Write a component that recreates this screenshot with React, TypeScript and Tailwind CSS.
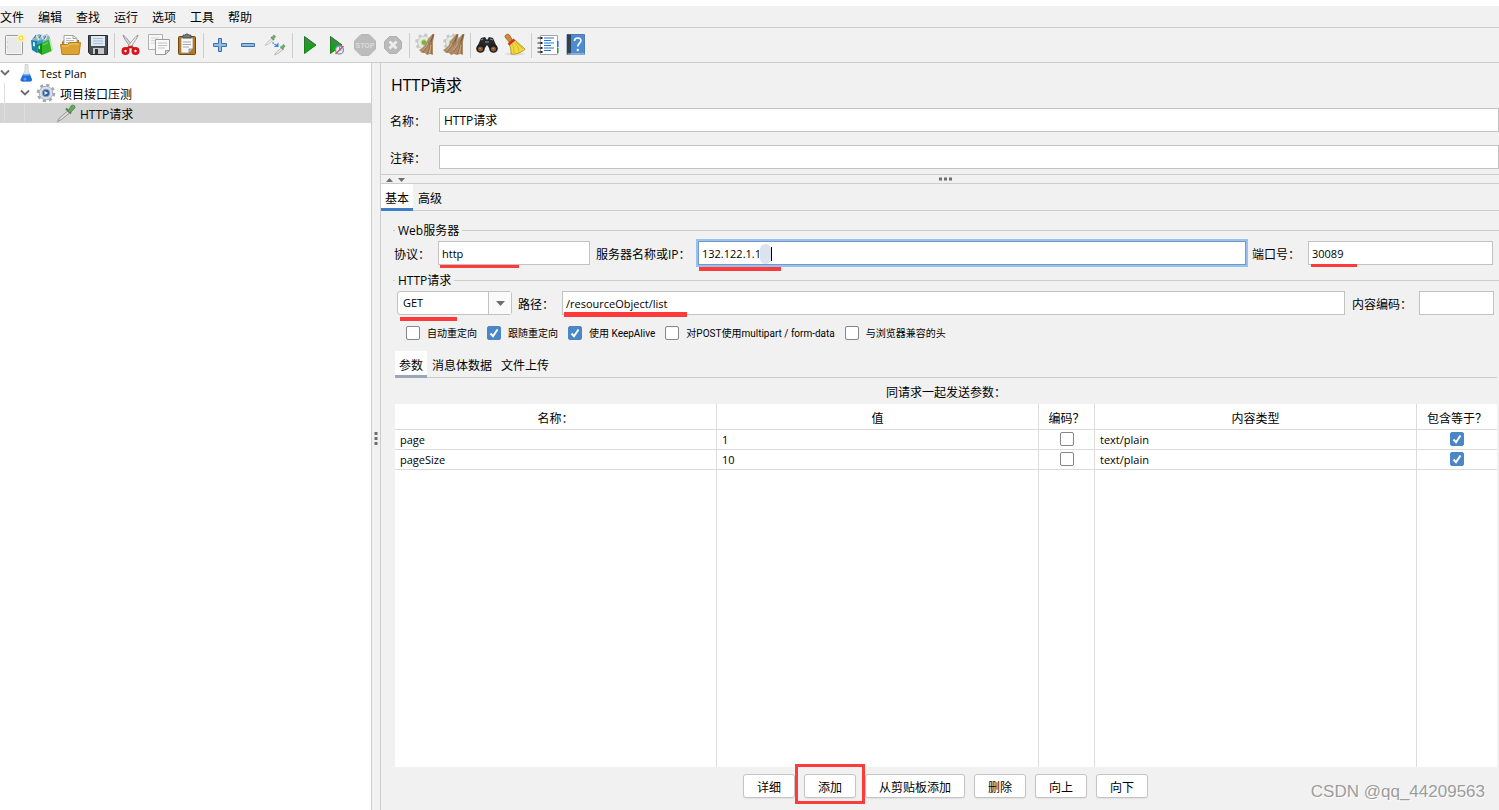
import React, { useState } from "react";

const menus = ["文件", "编辑", "查找", "运行", "选项", "工具", "帮助"];

function Svg({ children, size = 24 }: { children: React.ReactNode; size?: number }) {
  return (
    <svg width={size} height={size} viewBox={`0 0 ${size} ${size}`} fill="none" className="shrink-0" aria-hidden="true">
      {children}
    </svg>
  );
}

function NewIcon() {
  return (
    <Svg>
      <rect x="3.5" y="2.5" width="17" height="19" rx="1" fill="#f6f6f6" stroke="#9a9a9a" />
      <path d="M5 4h14v16H5z" fill="#e9e9e9" />
      <path d="M5 9h1M5 14h1" stroke="#bbb" />
      <circle cx="19" cy="5" r="4" fill="#fbf3a8" />
      <circle cx="19" cy="5" r="2.5" fill="#f2dc4a" />
      <circle cx="19" cy="5" r="1.2" fill="#fffce0" />
    </Svg>
  );
}

function TemplatesIcon() {
  return (
    <Svg>
      <path d="M2 6l4-4 4-1 3 2 4-2 3 3v9l-9 4-8-4z" fill="#8fb3c4" />
      <path d="M6 2l3 5M11 1l2 5M17 2l-2 5" stroke="#d5e5ed" strokeWidth="1.6" />
      <path d="M4 5l2-3M9 5l2-3M14 6l2-3" stroke="#47748c" />
      <path d="M1 7l6 1v12l-5-3z" fill="#1c7fb2" />
      <path d="M7 8l6-1v11l-6 2z" fill="#2fa2cf" />
      <path d="M3 9l2 .5v4l-2-.5z" fill="#c8eaf8" />
      <path d="M7 12l5-2v12l-4-3z" fill="#0e8a22" />
      <path d="M12 10l8-4 2 12-10 4z" fill="#35b52c" />
      <path d="M19 6l1.500 0 3 11-2 1z" fill="#c6e6bd" />
      <path d="M8.500 13l1.500-.5v4l-1.500-1z" fill="#c5f0bd" />
      <path d="M13 12l5-2.500" stroke="#7fdc6c" />
    </Svg>
  );
}

function OpenIcon() {
  return (
    <Svg>
      <path d="M4 20V9l2-2h15v13z" fill="#a87414" />
      <path d="M6 2.500h9l4 3V14H6z" fill="#fbfbfb" stroke="#a3a3a3" />
      <path d="M15 2.500v3h4" stroke="#a3a3a3" />
      <path d="M8 5.500h5M8 7.500h8M8 9.500h8" stroke="#b9b9b9" />
      <path d="M2.500 11.500h7l2-2h11l-1.500 12h-17z" fill="#dca233" stroke="#b98119" />
      <path d="M4 13h6l2-2h9" stroke="#f0c76c" />
    </Svg>
  );
}

function SaveIcon() {
  return (
    <Svg>
      <path d="M2.500 2.500h19v19h-17l-2-2z" fill="#4a4f56" stroke="#282c31" />
      <path d="M5 3h14v10H5z" fill="#dfeaf5" />
      <path d="M7 5.500h10M7 8h10M7 10.500h10" stroke="#a8c0d8" />
      <path d="M7 15h11v6H7z" fill="#c5c7ca" />
      <path d="M9 16h3v5H9z" fill="#30353b" />
    </Svg>
  );
}

function CutIcon() {
  return (
    <Svg>
      <path d="M4 2c0 2 5 9 8 13l2-2C10 8 6 3 4 2z" fill="#d8d8d8" stroke="#858585" strokeWidth=".8" />
      <path d="M19 2c0 2-5 9-8 13l-2-2c4-5 8-10 10-11z" fill="#f2f2f2" stroke="#858585" strokeWidth=".8" />
      <ellipse cx="6.500" cy="18" rx="2.600" ry="2.600" stroke="#d9141b" strokeWidth="2.800" />
      <ellipse cx="16.500" cy="18" rx="2.600" ry="2.600" stroke="#d9141b" strokeWidth="2.800" />
      <path d="M8 15.500l3-1.500h1l3 1.500" stroke="#d9141b" strokeWidth="2.500" />
    </Svg>
  );
}

function CopyIcon() {
  return (
    <Svg>
      <path d="M1.500 1.500h14v15h-14z" fill="#f6f6f6" stroke="#b0b0b0" />
      <path d="M4 5h8M4 7.500h8M4 10h4" stroke="#d6d6d6" />
      <path d="M8.500 6.500h14v11l-4 4h-10z" fill="#fafafa" stroke="#9a9a9a" />
      <path d="M22.500 17.500h-4v4z" fill="#d5d5d5" stroke="#9a9a9a" />
      <path d="M11 10h9M11 12.500h9M11 15h7" stroke="#c0c0c0" />
    </Svg>
  );
}

function PasteIcon() {
  return (
    <Svg>
      <rect x="3.500" y="3.500" width="17" height="18" rx="1" fill="#b97818" stroke="#74460a" />
      <path d="M6 5h12v11l-4 4H6z" fill="#f8f8f8" stroke="#888" strokeWidth=".7" />
      <path d="M18 16h-4v4z" fill="#c0c0c0" stroke="#777" strokeWidth=".7" />
      <path d="M8 9h8M8 11.500h8M8 14h6" stroke="#a9a9a9" />
      <path d="M8 2h2l1-1h2l1 1h2v3H8z" fill="#777" stroke="#444" strokeWidth=".7" />
    </Svg>
  );
}

function PlusIcon() {
  return (
    <Svg>
      <path d="M10.500 5.500h3v5h5v3h-5v5h-3v-5h-5v-3h5z" fill="#8fbbe4" stroke="#3a70ac" />
    </Svg>
  );
}

function MinusIcon() {
  return (
    <Svg>
      <path d="M5.500 10.500h13v3h-13z" fill="#8fbbe4" stroke="#3a70ac" />
    </Svg>
  );
}

function ToggleIcon() {
  return (
    <Svg>
      <path d="M1 12.500l2-3 5-4 1.500 1.500-5 4z" fill="#ececec" stroke="#bdbdbd" strokeWidth=".8" />
      <path d="M7 4l3 3" stroke="#5d9853" strokeWidth="1.600" />
      <path d="M8.500 5.500l2.500-3" stroke="#6faa5e" strokeWidth="2.800" />
      <path d="M10.500 22l2-3 5-4 1.500 1.500-5 4z" fill="#ececec" stroke="#adadad" strokeWidth=".8" />
      <path d="M16.500 13.500l3 3" stroke="#5d9853" strokeWidth="1.600" />
      <path d="M18 15l2.500-3" stroke="#6faa5e" strokeWidth="2.800" />
      <path d="M8.500 9.500l4 3" stroke="#2f86ec" strokeWidth="1.300" strokeDasharray="1.500 1" />
      <path d="M14.500 9.500v4.500H10z" fill="#2f86ec" />
    </Svg>
  );
}

function StartIcon() {
  return (
    <Svg>
      <path d="M7.500 3.500L19 12 7.500 20.500z" fill="#0f930f" stroke="#1f7a1f" />
      <path d="M8 4l10 8H8z" fill="#3f8746" />
      <path d="M8 12h10l-10 8z" fill="#0fa80f" />
    </Svg>
  );
}

function StartNoTimersIcon() {
  return (
    <Svg>
      <path d="M5.500 3.500L17 12 5.500 20.500z" fill="#0f930f" stroke="#1f7a1f" />
      <path d="M6 4l10 8H6z" fill="#3f8746" />
      <path d="M6 12h10l-10 8z" fill="#0fa80f" />
      <circle cx="14.500" cy="17" r="4" fill="#e9eef7" stroke="#6c98cc" strokeWidth="1.300" />
      <path d="M14.500 14v3h2" stroke="#6c98cc" />
      <path d="M10.500 21l8-8" stroke="#e04c4c" strokeWidth="1.300" />
    </Svg>
  );
}

function StopIcon() {
  return (
    <Svg>
      <path d="M8 1.500h8l6.500 6.500v8L16 22.500H8L1.500 16V8z" fill="#bcbcbc" stroke="#b6b6b6" />
      <text x="12" y="15" textAnchor="middle" fontSize="7" fontWeight="700" fill="#dadada" fontFamily="Liberation Sans, sans-serif">STOP</text>
    </Svg>
  );
}

function ShutdownIcon() {
  return (
    <Svg>
      <path d="M8.500 3.500h7l5 5v7l-5 5h-7l-5-5v-7z" fill="#bababa" stroke="#b2b2b2" />
      <path d="M8.500 8.500l7 7M15.500 8.500l-7 7" stroke="#ededed" strokeWidth="2.800" />
    </Svg>
  );
}

function BroomHead({ x }: { x: number }) {
  return (
    <g transform={`translate(${x} 0)`}>
      <path d="M18.500 1h2l-1.500 8v13l-3-1-3 1-2-2-3 0-3-3c4-2 7-6 9-11z" fill="#b08c69" />
      <path d="M19.500 1.500l-3 8" stroke="#80603c" strokeWidth="1.600" />
      <path d="M15 9c-1 4-3 7-6 10M16 10c0 4-1 7-3 11M17.500 10v11" stroke="#8a6844" strokeWidth=".8" />
      <path d="M14 10c-1 3-3 5-5 7M17 12l-1.500 8" stroke="#cfb290" strokeWidth=".8" />
    </g>
  );
}

function GearBack() {
  return (
    <g>
      <circle cx="10" cy="9.500" r="7.500" stroke="#c6cac6" strokeWidth="2.800" strokeDasharray="3 2.900" />
      <circle cx="10" cy="9.500" r="6.500" fill="#e6e9e6" stroke="#c2c6c2" />
      <circle cx="10" cy="9.500" r="2.800" fill="#70b832" stroke="#c0dca8" />
    </g>
  );
}

function ClearIcon() {
  return (
    <Svg>
      <GearBack />
      <BroomHead x={0} />
    </Svg>
  );
}

function ClearAllIcon() {
  return (
    <Svg>
      <GearBack />
      <BroomHead x={-4} />
      <BroomHead x={2} />
    </Svg>
  );
}

function SearchIcon() {
  return (
    <Svg>
      <path d="M3 12l3-7 4-1 2 3 2-3 4 1 3 7-3 3h-4l-2-3-2 3H6z" fill="#25292c" />
      <path d="M6 7l2-1M15 6l3 1" stroke="#85898c" strokeWidth="1.300" />
      <path d="M10 9h4" stroke="#777" strokeWidth="1.500" />
      <circle cx="5.500" cy="15.500" r="4.300" fill="#1d1d1d" />
      <circle cx="18.500" cy="15.500" r="4.300" fill="#1d1d1d" />
      <circle cx="5.500" cy="16" r="2.500" fill="#8a5533" />
      <circle cx="18.500" cy="16" r="2.500" fill="#8a5533" />
      <path d="M4 15l2 1M17 15l2 1" stroke="#c09070" />
    </Svg>
  );
}

function ResetIcon() {
  return (
    <Svg>
      <ellipse cx="12" cy="21" rx="10" ry="1.500" fill="#ddd" />
      <path d="M2 4c0-3 4-4 5-1l3 5-3 2z" fill="#d28b35" stroke="#94591b" strokeWidth=".8" />
      <path d="M6 11l6-4 10 9c0 1-2 2-4 3s-7 3-10 2c0-3 0-7-2-10z" fill="#f0d840" stroke="#a98c0c" strokeWidth=".8" />
      <path d="M9 11c2 3 2 6 2 9M12 10c2 3 4 5 4 8M13 9l7 7" stroke="#cfb020" strokeWidth=".8" />
      <path d="M5.500 11.500l6-5" stroke="#d82f22" strokeWidth="2.600" />
    </Svg>
  );
}

function FunctionIcon() {
  return (
    <Svg>
      <path d="M4.500 2.500h17v19h-17z" fill="#fff" stroke="#a5a5a5" />
      <path d="M8 5h10M8 7.500h7M8 10h10M8 12.500h7M8 15h10M8 17.500h7" stroke="#2779d8" strokeWidth="1.200" />
      <path d="M1.500 5h4M1.500 10h4M1.500 15h4M1.500 19h4" stroke="#8a8a8a" strokeWidth="2.200" />
      <path d="M4.500 5h2M4.500 10h2M4.500 15h2M4.500 19h2" stroke="#222" strokeWidth="2" />
      <path d="M21 8h1.500v6H21z" fill="#2270d8" />
      <path d="M21 15h1.500v5H21z" fill="#2d9b32" />
    </Svg>
  );
}

function HelpIcon() {
  return (
    <Svg>
      <path d="M3 1.500h17.500v20H3z" fill="#4c8cd2" stroke="#3b6ca6" strokeWidth=".8" />
      <path d="M3 1.500h4v20H3z" fill="#33414f" />
      <path d="M3.500 21h17" stroke="#c9d6e4" />
      <path d="M10.500 8c0-4 6.500-4 6.500-.5 0 2.500-3.200 2.800-3.200 6" stroke="#fff" strokeWidth="1.600" />
      <circle cx="13.800" cy="17" r="1.200" fill="#fff" />
    </Svg>
  );
}

const toolGroups = [
  [
    { label: "新建", Icon: NewIcon },
    { label: "模板", Icon: TemplatesIcon },
    { label: "打开", Icon: OpenIcon },
    { label: "保存", Icon: SaveIcon },
  ],
  [
    { label: "剪切", Icon: CutIcon },
    { label: "复制", Icon: CopyIcon },
    { label: "粘贴", Icon: PasteIcon },
  ],
  [
    { label: "展开", Icon: PlusIcon },
    { label: "折叠", Icon: MinusIcon },
    { label: "切换", Icon: ToggleIcon },
  ],
  [
    { label: "启动", Icon: StartIcon },
    { label: "无间隔启动", Icon: StartNoTimersIcon },
    { label: "停止", Icon: StopIcon },
    { label: "关闭", Icon: ShutdownIcon },
  ],
  [
    { label: "清除", Icon: ClearIcon },
    { label: "清除全部", Icon: ClearAllIcon },
  ],
  [
    { label: "查找", Icon: SearchIcon },
    { label: "重置查找", Icon: ResetIcon },
  ],
  [
    { label: "函数助手", Icon: FunctionIcon },
    { label: "帮助", Icon: HelpIcon },
  ],
];

function FlaskIcon() {
  return (
    <Svg size={20}>
      <path d="M9 1.500h3v6l3.500 8.500c.5 1.500-.2 2.500-1.500 2.500H6.500c-1.300 0-2-1-1.500-2.500L9 7.500z" fill="#dfe6ec" stroke="#c3cbd3" strokeWidth=".8" />
      <path d="M7 11.500h7l2 5c0 1.300-.6 2-1.500 2H6c-1 0-1.500-.7-1.500-2z" fill="#1f6fdb" />
      <path d="M7.500 12h6" stroke="#7bb5f5" />
      <circle cx="9" cy="16" r="1.500" fill="#5aa0f5" />
    </Svg>
  );
}

function GearIcon() {
  return (
    <Svg size={20}>
      <circle cx="10" cy="10" r="8" stroke="#a4a9af" strokeWidth="2.600" strokeDasharray="3.200 3.080" />
      <circle cx="10" cy="10" r="6.800" fill="#dcdfe3" stroke="#a9aeb4" />
      <circle cx="10" cy="10" r="3.800" fill="#2c5c9c" stroke="#8ea6c6" />
      <path d="M8.500 8l3.500 2-3.500 2z" fill="#e8f0fa" />
    </Svg>
  );
}

function DropperIcon() {
  return (
    <Svg size={20}>
      <path d="M1.500 18.500l2-3.500 8-7 2 2-8 6.500z" fill="#dcdcdc" stroke="#8d8d8d" strokeWidth=".9" />
      <path d="M10 5.500l5 5" stroke="#4d7f44" strokeWidth="2" />
      <path d="M12 8l3-5c1-1.500 4-1 4 1 0 1-.5 1.500-1 2l-4 4z" fill="#66a758" stroke="#4d7f44" strokeWidth=".8" />
    </Svg>
  );
}

const treeRows = [
  { level: 0, label: "Test Plan", Icon: FlaskIcon, open: true, latin: true },
  { level: 1, label: "项目接口压测", Icon: GearIcon, open: true },
  { level: 2, label: "HTTP请求", Icon: DropperIcon, selected: true },
];

function Tree() {
  return (
    <ul role="tree">
      {treeRows.map((row) => (
        <li
          key={row.label}
          role="treeitem"
          aria-selected={!!row.selected}
          className={row.selected ? "flex h-5 items-center bg-[#d4d4d4]" : "flex h-5 items-center"}
        >
          {Array.from({ length: row.level }, (_, i) => (
            <span key={i} className="flex h-5 w-5 shrink-0 pl-1">
              <span className="border-l border-[#dedede]" />
            </span>
          ))}
          <span className="w-4 shrink-0">
            {row.open && (
              <svg width="10" height="10" viewBox="0 0 10 10" fill="none" aria-hidden="true">
                <path d="M1 2.500l4 4 4-4" stroke="#6e6e6e" strokeWidth="1.800" />
              </svg>
            )}
          </span>
          <row.Icon />
          <span className={row.latin ? "pt-0.5 pl-1 text-[11px]" : "pt-[3px] pl-1"}>{row.label}</span>
        </li>
      ))}
    </ul>
  );
}

const fieldClass = "h-6 w-full min-w-0 border border-[#c2c2c2] bg-white px-[3px] text-[11px] outline-none";

function Tabs({ items, accent }: { items: string[]; accent: string }) {
  const [active, setActive] = useState(0);
  return (
    <div role="tablist" className="flex h-[27px] shrink-0 gap-px border-b border-[#cdcdcd]">
      {items.map((item, i) => (
        <button
          key={item}
          type="button"
          role="tab"
          aria-selected={i === active}
          onClick={() => setActive(i)}
          className={
            i === active
              ? `-mb-px border-b-3 bg-white px-1 pt-[5px] ${accent}`
              : "-mb-px border-b-3 border-transparent px-1 pt-[5px]"
          }
        >
          {item}
        </button>
      ))}
    </div>
  );
}

function CheckBox({ id, checked, label }: { id?: string; checked?: boolean; label?: string }) {
  return (
    <span className="relative inline-flex size-3.5 shrink-0">
      <input
        id={id}
        type="checkbox"
        aria-label={label}
        defaultChecked={checked}
        className="peer size-3.5 appearance-none rounded-[2px] border border-[#868686] bg-white checked:border-[#4a86c8] checked:bg-[#4a86c8]"
      />
      <svg
        viewBox="0 0 14 14"
        fill="none"
        aria-hidden="true"
        className="pointer-events-none absolute inset-0 hidden size-3.5 peer-checked:block"
      >
        <path d="M3.500 7.500l2.500 2.700 4.500-6.700" stroke="#fff" strokeWidth="2" />
      </svg>
    </span>
  );
}

const options = [
  { id: "autoRedirect", label: "自动重定向" },
  { id: "followRedirect", label: "跟随重定向", checked: true },
  { id: "keepAlive", label: "使用 KeepAlive", checked: true },
  { id: "multipart", label: "对POST使用multipart / form-data" },
  { id: "browserHeaders", label: "与浏览器兼容的头" },
];

const params = [
  { name: "page", value: "1", type: "text/plain" },
  { name: "pageSize", value: "10", type: "text/plain" },
];

const columns = ["名称：", "值", "编码？", "内容类型", "包含等于？"];

const cell = "border-r border-[#dcdcdc] last:border-r-0";

function ParamsTable() {
  return (
    <table className="h-full w-full table-fixed border-separate border-spacing-0 bg-white">
      <colgroup>
        <col />
        <col />
        <col className="w-14" />
        <col />
        <col className="w-20" />
      </colgroup>
      <thead>
        <tr className="h-[26px]">
          {columns.map((c) => (
            <th key={c} className={`${cell} border-b px-0 pt-1 pb-0 font-normal`}>
              {c}
            </th>
          ))}
        </tr>
      </thead>
      <tbody>
        {params.map((p) => (
          <tr key={p.name} className="h-5 text-[11px] leading-4">
            <td className={`${cell} border-b px-[5px] py-0`}>{p.name}</td>
            <td className={`${cell} border-b px-[5px] py-0`}>{p.value}</td>
            <td className={`${cell} border-b p-0`}>
              <div className="flex justify-center pb-0.5">
                <CheckBox label={`${p.name} 编码`} />
              </div>
            </td>
            <td className={`${cell} border-b px-[5px] py-0`}>{p.type}</td>
            <td className={`${cell} border-b p-0`}>
              <div className="flex justify-center pb-0.5">
                <CheckBox label={`${p.name} 包含等于`} checked />
              </div>
            </td>
          </tr>
        ))}
        <tr>
          {columns.map((c) => (
            <td key={c} className={`${cell} p-0`} />
          ))}
        </tr>
      </tbody>
    </table>
  );
}

function Actions() {
  const buttonClass =
    "h-6 rounded-[3px] border border-[#c4c4c4] bg-white px-[13px] pt-1 shadow-[0_1px_1px_#e2e2e2]";
  return (
    <div className="flex justify-center gap-[9px] pt-[7px] pr-px pb-3">
      <button type="button" className={buttonClass}>详细</button>
      <div className="relative flex">
        <button type="button" className={buttonClass}>添加</button>
        <span className="pointer-events-none absolute -inset-x-[9px] -top-2.5 -bottom-1.5 z-10 border-3 border-[#fe3a3a]" />
      </div>
      <button type="button" className={buttonClass}>从剪贴板添加</button>
      <button type="button" className={buttonClass}>删除</button>
      <button type="button" className={buttonClass}>向上</button>
      <button type="button" className={buttonClass}>向下</button>
    </div>
  );
}

function Underline({ className }: { className: string }) {
  return <span className={`pointer-events-none absolute bg-[#fe3a3a] ${className}`} />;
}

function RequestForm() {
  return (
    <div className="pt-[11px] pl-3">
      <fieldset className="border-t border-[#cdcdcd] pb-[7px]">
        <legend className="ml-0.5 h-4 px-[3px] leading-[18px]">Web服务器</legend>
        <div className="flex h-[27px] items-center pt-[3px] pr-1.5">
          <label htmlFor="protocol" className="w-[45px] shrink-0 pt-[3px] pl-px">协议：</label>
          <div className="relative w-[152px] shrink-0">
            <input id="protocol" defaultValue="http" className={fieldClass} />
            <Underline className="top-6 left-0.5 h-[3px] w-[79px]" />
          </div>
          <label htmlFor="server" className="w-[108px] shrink-0 pt-[3px] pl-1.5">服务器名称或IP：</label>
          <div className="relative min-w-0 flex-1">
            <input
              id="server"
              defaultValue="132.122.1.1."
              className="h-6 w-full border border-[#7399c4] bg-white px-[3px] text-[11px] ring-2 ring-[#97c1f1] outline-none"
            />
            <span className="absolute top-[3px] left-[62px] h-5 w-[11px] rounded-full bg-[#dbe3ee]" />
            <span className="absolute top-1.5 left-[73px] h-3.5 w-px bg-black" />
            <Underline className="top-[26px] left-px h-1 w-[82px]" />
          </div>
          <label htmlFor="port" className="w-[62px] shrink-0 pt-[3px] pl-1.5">端口号：</label>
          <div className="relative w-[185px] shrink-0">
            <input id="port" defaultValue="30089" className={fieldClass} />
            <Underline className="top-[23px] left-[3px] h-[3px] w-[46px]" />
          </div>
        </div>
      </fieldset>

      <fieldset className="border-t border-[#cdcdcd]">
        <legend className="ml-0.5 h-4 px-[3px] leading-[18px]">HTTP请求</legend>
        <div className="flex h-[27px] items-center pt-[3px] pr-[5px] pl-1">
          <div className="relative w-[115px] shrink-0">
            <select
              aria-label="方法"
              className="block h-6 w-full appearance-none rounded-[3px] border border-[#c2c2c2] bg-white px-[5px] text-[11px] outline-none"
            >
              <option>GET</option>
              <option>POST</option>
            </select>
            <span className="pointer-events-none absolute inset-y-px right-px flex w-[23px] items-center justify-center border-l border-[#c2c2c2] bg-[#fafafa]">
              <svg width="9" height="5" viewBox="0 0 9 5" aria-hidden="true">
                <path d="M0 0h9L4.500 5z" fill="#6e6e6e" />
              </svg>
            </span>
            <Underline className="top-[26px] left-[3px] h-1 w-[57px]" />
          </div>
          <label htmlFor="path" className="w-[50px] shrink-0 pt-[3px] pl-1.5">路径：</label>
          <div className="relative min-w-0 flex-1">
            <input id="path" defaultValue="/resourceObject/list" className={fieldClass} />
            <Underline className="top-[21px] left-0.5 h-[5px] w-[123px]" />
          </div>
          <label htmlFor="encoding" className="w-[74px] shrink-0 pt-[3px] pl-[7px]">内容编码：</label>
          <div className="w-[75px] shrink-0">
            <input id="encoding" className={`${fieldClass} block`} />
          </div>
        </div>
        <div className="flex gap-2.5 pt-[11px] pb-[11px] pl-[13px] font-[Roboto,'Noto_Sans_CJK_SC',sans-serif] text-[10px] leading-[14px]">
          {options.map((o) => (
            <div key={o.id} className="flex h-3.5 items-center gap-[7px]">
              <CheckBox id={o.id} checked={o.checked} />
              <label htmlFor={o.id} className="pt-px">{o.label}</label>
            </div>
          ))}
        </div>
      </fieldset>
    </div>
  );
}

function SamplerPanel() {
  return (
    <main className="relative flex min-h-0 min-w-0 flex-1 flex-col border-l border-[#cdcdcd]">
      <h1 className="h-[45px] pl-2.5 text-base leading-[45px]">HTTP请求</h1>
      <div className="flex items-center">
        <label htmlFor="name" className="w-[58px] shrink-0 pt-[3px] pl-[9px]">名称：</label>
        <input id="name" defaultValue="HTTP请求" className="h-6 min-w-0 flex-1 border border-[#c2c2c2] bg-white px-1 outline-none" />
      </div>
      <div className="mt-[13px] mb-[5px] flex items-center">
        <label htmlFor="comment" className="w-[58px] shrink-0 pt-[3px] pl-[9px]">注释：</label>
        <input id="comment" className="h-6 min-w-0 flex-1 border border-[#c2c2c2] bg-white px-1 outline-none" />
      </div>
      <div className="flex h-2.5 shrink-0 items-center border-y border-[#cdcdcd] pr-3.5 pl-1">
        <svg width="20" height="5" viewBox="0 0 20 5" aria-hidden="true">
          <path d="M1 5h7L4.500 1zM13 1h7l-3.500 4z" fill="#6e6e6e" />
        </svg>
        <svg width="13" height="4" viewBox="0 0 13 4" className="mx-auto" aria-hidden="true">
          <path d="M0 .500h3v3H0zM5 .500h3v3H5zM10 .500h3v3h-3z" fill="#6e6e6e" />
        </svg>
      </div>
      <Tabs items={["基本", "高级"]} accent="border-[#3d7fc9]" />
      <RequestForm />
      <div className="flex min-h-0 flex-1 flex-col pr-0.5 pl-3.5">
        <Tabs items={["参数", "消息体数据", "文件上传"]} accent="border-[#9aa7b7]" />
        <p className="h-[26px] text-center leading-[30px]">同请求一起发送参数：</p>
        <div className="min-h-0 flex-1">
          <ParamsTable />
        </div>
        <Actions />
      </div>
      <p className="pointer-events-none absolute right-3.5 bottom-1.5 font-['Liberation_Sans',sans-serif] text-[17px] leading-6 text-[#9c9c9c] [text-shadow:1px_1px_0_#ffffff]">
        CSDN @qq_44209563
      </p>
    </main>
  );
}

export default function App() {
  return (
    <div className="flex h-screen min-h-[600px] flex-col overflow-hidden border-t-6 border-white bg-[#f1f1f1] font-['Open_Sans','Noto_Sans_CJK_SC',sans-serif] text-xs text-black">
      <nav className="flex h-[22px] shrink-0 items-center gap-3.5 border-b border-[#cdcdcd] pt-0.5">
        {menus.map((m) => (
          <button key={m} type="button">{m}</button>
        ))}
      </nav>
      <div role="toolbar" className="flex h-[35px] shrink-0 items-center border-b border-[#cdcdcd]">
        {toolGroups.map((group, i) => (
          <div key={i} className="flex items-center">
            {i > 0 && <span className="mx-0.5 h-[25px] w-px bg-[#cdcdcd]" />}
            {group.map(({ label, Icon }) => (
              <button key={label} type="button" aria-label={label} className="flex h-7 w-7 items-center justify-center">
                <Icon />
              </button>
            ))}
          </div>
        ))}
      </div>
      <div className="flex min-h-0 flex-1">
        <aside className="w-[372px] shrink-0 border-r border-[#cdcdcd] bg-white">
          <Tree />
        </aside>
        <div className="flex w-2 shrink-0 items-center justify-center pt-1">
          <svg width="4" height="13" viewBox="0 0 4 13" aria-hidden="true">
            <path d="M.500 0h3v3h-3zM.500 5h3v3h-3zM.500 10h3v3h-3z" fill="#6e6e6e" />
          </svg>
        </div>
        <SamplerPanel />
      </div>
    </div>
  );
}
